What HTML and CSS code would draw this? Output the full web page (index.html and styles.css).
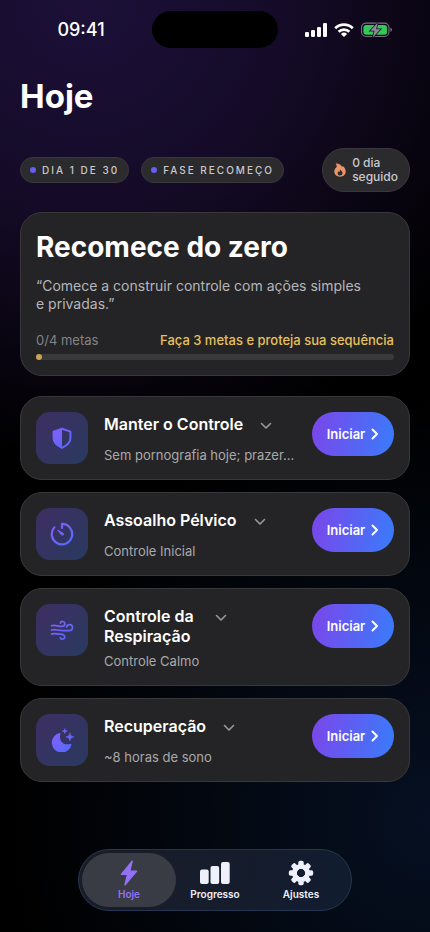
FILE: index.html
```html
<!DOCTYPE html>
<html lang="pt-BR">
<head>
<meta charset="utf-8">
<meta name="viewport" content="width=device-width, initial-scale=1">
<title>Hoje</title>
<link rel="stylesheet" href="styles.css">
</head>
<body>
<svg class="defs" aria-hidden="true">
  <defs>
    <linearGradient id="accent" x1="0" y1="0" x2="24" y2="24" gradientUnits="userSpaceOnUse">
      <stop offset="0" stop-color="#8b5cf6"/>
      <stop offset="1" stop-color="#4f6bff"/>
    </linearGradient>
  </defs>
</svg>
<div class="app">
  <header class="status">
    <time class="clock">09:41</time>
    <div class="island"></div>
    <div class="indicators">
      <svg width="22" height="14" viewBox="0 0 22 14" fill="#fff" aria-hidden="true">
        <rect x="0" y="9" width="4" height="5" rx="1.2"/>
        <rect x="6" y="7" width="4" height="7" rx="1.2"/>
        <rect x="12" y="4" width="4" height="10" rx="1.2"/>
        <rect x="18" y="0" width="4" height="14" rx="1.2"/>
      </svg>
      <svg width="20" height="14" viewBox="0 0 20 14" fill="none" stroke="#fff" stroke-width="2.7" aria-hidden="true">
        <path d="M1.2 5.2a12.6 12.6 0 0 1 17.6 0"/>
        <path d="M4.6 8.7a7.8 7.8 0 0 1 10.8 0"/>
        <path d="M10 14 6.9 10.9a4.5 4.5 0 0 1 6.2 0z" fill="#fff" stroke="none"/>
      </svg>
      <svg width="31" height="16" viewBox="0 0 31 16" aria-hidden="true">
        <rect x=".6" y="1.1" width="27.3" height="13.4" rx="4.4" fill="none" stroke="#77717f" stroke-width="1.1"/>
        <rect x="2.4" y="2.9" width="23.7" height="9.8" rx="2.9" fill="#34c759"/>
        <path d="M29.3 5.8c1.2.4 1.7 1.2 1.7 2s-.5 1.6-1.7 2z" fill="#77717f"/>
        <path d="M16.8.5 9.3 8.7h4.2L11.8 15.5 19.4 7.2h-4.3z" fill="#8d8796" stroke="#1b102f" stroke-width="1.5" paint-order="stroke"/>
      </svg>
    </div>
  </header>

  <main class="content">
    <h1>Hoje</h1>

    <div class="chips">
      <span class="chip">DIA 1 DE 30</span>
      <span class="chip">FASE RECOMEÇO</span>
      <span class="streak">
        <svg width="12" height="14" viewBox="0 0 12 14" aria-hidden="true">
          <path d="M1.600.5c3-.3 5.600.9 6.500 3.500.3-.3.400-.7.400-1.100 2.200 1.300 3.200 3.400 3.200 5.600 0 3.200-2.500 5.200-5.700 5.200S.3 11.600.3 8.600c0-1.900.8-3.100 1.900-4.100.8-.8.700-2.500-.6-4z" fill="#eb9468"/>
          <path d="M6.300 6.400c.2 1.100 2.300 1.800 2.300 3.700 0 1.500-1.100 2.400-2.500 2.400s-2.500-.9-2.500-2.300c0-.9.4-1.500 1-2 .2.500.4.700.7.800.5-.7.4-1.800 1-2.600z" fill="#2d2c2f"/>
        </svg>
        <span>0 dia<br>seguido</span>
      </span>
    </div>

    <section class="card summary">
      <h2>Recomece do zero</h2>
      <p class="quote">“Comece a construir controle com ações simples<br>e privadas.”</p>
      <div class="goals">
        <span id="goals">0/4 metas</span>
        <strong>Faça 3 metas e proteja sua sequência</strong>
      </div>
      <div class="track" role="progressbar" aria-labelledby="goals" aria-valuemin="0" aria-valuemax="4" aria-valuenow="0"><div class="fill"></div></div>
    </section>

    <section class="tasks">
      <article class="card task">
        <div class="tile">
          <svg width="24" height="24" viewBox="0 0 24 24" aria-hidden="true">
            <path d="M12 2.700 20.400 5.600v6.800c0 4.200-3.400 6.900-8.400 9.500-5-2.600-8.400-5.300-8.400-9.500V5.600z" fill="none" stroke="url(#accent)" stroke-width="2" stroke-linejoin="round"/>
            <path d="M12 2.700 3.600 5.600v6.800c0 4.200 3.400 6.900 8.400 9.500z" fill="url(#accent)"/>
          </svg>
        </div>
        <div class="info">
          <div class="heading">
            <h3>Manter o Controle</h3>
            <button class="expand" type="button" aria-label="Mostrar detalhes"><svg width="12" height="8" viewBox="0 0 12 8"><path d="m1.500 1.500 4.500 4.500 4.500-4.500"/></svg></button>
          </div>
          <p>Sem pornografia hoje; prazer...</p>
        </div>
        <button class="start" type="button">Iniciar <svg width="8" height="12" viewBox="0 0 8 12" aria-hidden="true"><path d="m1.500 1.500 4.500 4.500-4.500 4.500"/></svg></button>
      </article>

      <article class="card task">
        <div class="tile">
          <svg width="24" height="24" viewBox="0 0 24 24" fill="none" stroke="url(#accent)" stroke-width="2.200" stroke-linecap="round" stroke-linejoin="round" aria-hidden="true">
            <path d="M12 6V1.900A10.200 10.200 0 1 1 4.300 5.400"/>
            <path d="m8 8.200 5.400 3.300a1.200 1.200 0 0 1-1.600 1.600z" fill="url(#accent)" stroke-width="1"/>
          </svg>
        </div>
        <div class="info">
          <div class="heading">
            <h3>Assoalho Pélvico</h3>
            <button class="expand" type="button" aria-label="Mostrar detalhes"><svg width="12" height="8" viewBox="0 0 12 8"><path d="m1.500 1.500 4.500 4.500 4.500-4.500"/></svg></button>
          </div>
          <p>Controle Inicial</p>
        </div>
        <button class="start" type="button">Iniciar <svg width="8" height="12" viewBox="0 0 8 12" aria-hidden="true"><path d="m1.500 1.500 4.500 4.500-4.500 4.500"/></svg></button>
      </article>

      <article class="card task">
        <div class="tile">
          <svg width="24" height="24" viewBox="0 0 24 24" fill="none" stroke="url(#accent)" stroke-width="1.700" stroke-linecap="round" aria-hidden="true">
            <path d="M1.500 7.800c3.500-1.400 6 .6 9.800.6 2.300 0 3.600-1.100 3.600-2.700a2.300 2.300 0 0 0-4.500-.6"/>
            <path d="M1.500 12c3.500-1.400 6.500.7 11.500.7h5.800c2.300 0 3.700-1.300 3.700-3.200a3 3 0 0 0-5.900-.6"/>
            <path d="M1.500 16c3.500-1.300 5.800.2 9 .2 2.600 0 4.200.9 4.200 2.900a2.300 2.300 0 0 1-4.500.5"/>
          </svg>
        </div>
        <div class="info">
          <div class="heading">
            <h3 class="narrow">Controle da Respiração</h3>
            <button class="expand" type="button" aria-label="Mostrar detalhes"><svg width="12" height="8" viewBox="0 0 12 8"><path d="m1.500 1.500 4.500 4.500 4.500-4.500"/></svg></button>
          </div>
          <p>Controle Calmo</p>
        </div>
        <button class="start" type="button">Iniciar <svg width="8" height="12" viewBox="0 0 8 12" aria-hidden="true"><path d="m1.500 1.500 4.500 4.500-4.500 4.500"/></svg></button>
      </article>

      <article class="card task">
        <div class="tile">
          <svg width="24" height="24" viewBox="0 0 24 24" fill="url(#accent)" aria-hidden="true">
            <path d="M9.700 5c.5-.2 1 .3.800.8-2.300 6.800 3.200 12.200 10 10.100.6-.2 1.100.3.900.8A9.900 9.900 0 1 1 9.700 5z"/>
            <path d="M14.800.6c.4 1.800.8 2.200 2.500 2.500-1.700.4-2.100.8-2.500 2.500-.4-1.700-.8-2.100-2.500-2.500 1.700-.3 2.100-.7 2.500-2.500z" stroke="url(#accent)" stroke-width=".6" stroke-linejoin="round"/>
            <path d="M19.900 4.900c.6 2.800 1.200 3.400 4 4-2.800.6-3.400 1.200-4 4-.6-2.800-1.200-3.400-4-4 2.800-.6 3.400-1.200 4-4z" stroke="url(#accent)" stroke-width=".6" stroke-linejoin="round"/>
          </svg>
        </div>
        <div class="info">
          <div class="heading">
            <h3>Recuperação</h3>
            <button class="expand" type="button" aria-label="Mostrar detalhes"><svg width="12" height="8" viewBox="0 0 12 8"><path d="m1.500 1.500 4.500 4.500 4.500-4.500"/></svg></button>
          </div>
          <p>~8 horas de sono</p>
        </div>
        <button class="start" type="button">Iniciar <svg width="8" height="12" viewBox="0 0 8 12" aria-hidden="true"><path d="m1.500 1.500 4.500 4.500-4.500 4.500"/></svg></button>
      </article>
    </section>
  </main>

  <nav class="tabs">
    <a class="tab active" href="#hoje" aria-current="page">
      <svg width="30" height="26" viewBox="0 0 30 26" fill="currentColor" stroke="currentColor" stroke-width="1.200" stroke-linejoin="round" aria-hidden="true"><path d="M18.300 1 7.300 14.300h6.200L10.900 25 22.700 11.200h-6.900z"/></svg>
      Hoje
    </a>
    <a class="tab" href="#progresso">
      <svg width="30" height="26" viewBox="0 0 30 26" fill="currentColor" aria-hidden="true">
        <rect x="0" y="9.500" width="8.700" height="14.500" rx="2"/><rect x="10.500" y="6" width="8.700" height="18" rx="2"/><rect x="21" y="2" width="8.700" height="22" rx="2"/>
      </svg>
      Progresso
    </a>
    <a class="tab" href="#ajustes">
      <svg width="30" height="26" viewBox="-15 -13 30 26" fill="currentColor" aria-hidden="true">
        <g id="teeth"><rect x="-2.700" y="-12.200" width="5.400" height="24.400" rx="1.800" mask="url(#hub)"/></g>
        <mask id="hub" maskUnits="userSpaceOnUse" x="-15" y="-15" width="30" height="30"><rect x="-15" y="-15" width="30" height="30" fill="#fff"/><circle r="4.300" fill="#000"/></mask>
        <use href="#teeth" transform="rotate(45)"/><use href="#teeth" transform="rotate(90)"/><use href="#teeth" transform="rotate(135)"/>
        <circle r="6.700" fill="none" stroke="currentColor" stroke-width="4.800"/>
      </svg>
      Ajustes
    </a>
  </nav>
</div>
</body>
</html>
```
FILE: styles.css
```css
* {
  box-sizing: border-box;
}

body {
  margin: 0;
  background: #000;
  color: #fff;
  font-family: Inter, "Liberation Sans", sans-serif;
}

h1, h2, h3, p {
  margin: 0;
}

button {
  border: 0;
  padding: 0;
  background: none;
  color: inherit;
  font: inherit;
}

svg {
  display: block;
  flex: none;
}

.defs {
  position: absolute;
  width: 0;
  height: 0;
}

.app {
  display: flex;
  flex-direction: column;
  min-height: 100vh;
  background:
    radial-gradient(circle at 20% 0, #1c1038 0, #150b28 200px, transparent 460px),
    radial-gradient(circle at 100% 88%, #061022 0, transparent 420px),
    #000;
}

.status {
  display: grid;
  grid-template-columns: 1fr auto 1fr;
  align-items: center;
  padding-top: 11px;
}

.clock {
  justify-self: center;
  padding-left: 10px;
  font-size: 18px;
  font-weight: 500;
}

.island {
  width: 126px;
  height: 37px;
  border-radius: 19px;
  background: #000;
}

.indicators {
  display: flex;
  align-items: center;
  justify-self: center;
  gap: 7px;
  padding-right: 12px;
}

.content {
  padding: 0 20px 24px;
}

h1 {
  margin-top: 28px;
  font-size: 33px;
  line-height: 40px;
  font-weight: 700;
}

.chips {
  display: flex;
  align-items: center;
  gap: 12px;
  margin-top: 32px;
}

.chip {
  display: flex;
  align-items: center;
  gap: 6px;
  height: 26px;
  padding: 0 9px;
  border: 1px solid #3a383e;
  border-radius: 13px;
  background: #2b2a2d;
  color: #c9c8cb;
  font-size: 10px;
  font-weight: 500;
  letter-spacing: 2px;
  white-space: nowrap;
}

.chip::before {
  content: "";
  width: 6px;
  height: 6px;
  border-radius: 50%;
  background: #665df5;
}

.streak {
  display: flex;
  align-items: center;
  gap: 6px;
  height: 44px;
  margin-left: auto;
  padding: 0 11px;
  border: 1px solid #3a383e;
  border-radius: 22px;
  background: #2b2a2d;
  color: #c9c8cb;
  font-size: 12px;
  line-height: 14px;
  font-weight: 500;
}

.card {
  border: 1px solid #39393b;
  border-radius: 22px;
  background: #242426;
}

.summary {
  margin-top: 20px;
  padding: 15px;
}

h2 {
  font-size: 28px;
  line-height: 38px;
  font-weight: 700;
}

.quote {
  margin-top: 11px;
  color: #b6b6b8;
  font-size: 14px;
  line-height: 18px;
}

.goals {
  display: flex;
  justify-content: space-between;
  margin-top: 19px;
  color: #838385;
  font-size: 13px;
  line-height: 16px;
  white-space: nowrap;
}

.goals strong {
  color: #e6c15c;
  font-weight: 500;
}

.track {
  height: 6px;
  margin-top: 6px;
  border-radius: 3px;
  background: #39393b;
}

.fill {
  width: 6px;
  height: 6px;
  border-radius: 3px;
  background: #c9a550;
}

.tasks {
  display: grid;
  grid-template-columns: minmax(0, 1fr);
  gap: 12px;
  margin-top: 20px;
}

.task {
  display: flex;
  align-items: flex-start;
  padding: 15px;
}

.tile {
  display: grid;
  flex: none;
  place-items: center;
  width: 52px;
  height: 52px;
  border-radius: 14px;
  background: linear-gradient(135deg, #3e2e62, #293a60);
}

.info {
  flex: 1;
  min-width: 0;
  margin: 0 12px 0 16px;
}

.heading {
  display: flex;
  align-items: flex-start;
  gap: 8px;
}

h3 {
  padding-top: 2px;
  font-size: 16px;
  line-height: 20px;
  font-weight: 600;
}

.narrow {
  width: 94px;
}

.expand {
  display: grid;
  flex: none;
  place-items: center;
  width: 30px;
  height: 28px;
}

.expand path,
.start path {
  fill: none;
  stroke: currentColor;
  stroke-linecap: round;
  stroke-linejoin: round;
}

.expand path {
  stroke: #99999b;
  stroke-width: 1.6;
}

.info p {
  margin-top: 6px;
  overflow: hidden;
  color: #a9a9ab;
  font-size: 13px;
  line-height: 18px;
  text-overflow: ellipsis;
  white-space: nowrap;
}

.start {
  display: flex;
  flex: none;
  align-items: center;
  justify-content: center;
  gap: 6px;
  width: 82px;
  height: 44px;
  border-radius: 22px;
  background: linear-gradient(100deg, #7c45ea, #397cfb);
  font-size: 13px;
  font-weight: 600;
}

.start path {
  stroke-width: 2;
}

.tabs {
  display: flex;
  align-self: center;
  margin: auto 0 21px;
  padding: 3px;
  border: 1px solid #263650;
  border-radius: 31px;
  background: linear-gradient(100deg, #191d27, #121c30);
}

.tab {
  display: flex;
  flex-direction: column;
  align-items: center;
  gap: 2px;
  width: 94px;
  padding: 7px 0 6px;
  border-radius: 27px;
  color: #eef0fc;
  font-size: 10px;
  line-height: 13px;
  font-weight: 600;
  text-decoration: none;
}

.tab + .tab {
  margin-left: -8px;
}

.tab.active {
  background: #393c45;
  color: #9271f7;
}
```
